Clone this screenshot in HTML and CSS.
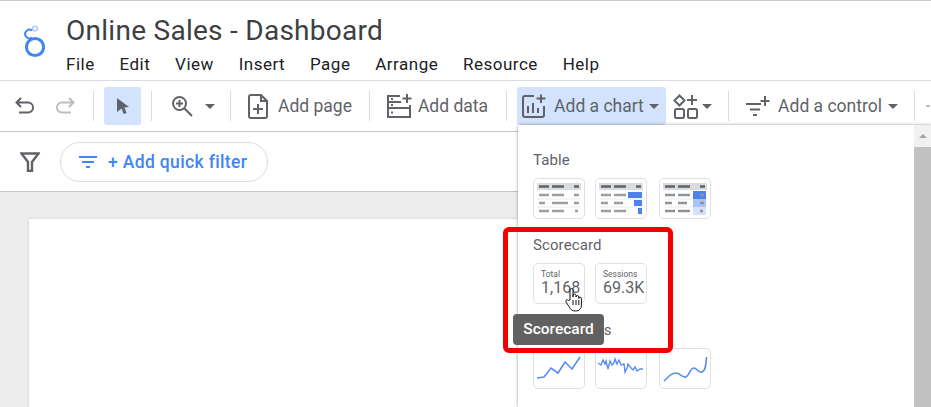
FILE: index.html
```html
<!DOCTYPE html>
<html lang="en">
<head>
  <meta charset="UTF-8">
  <title>Online Sales - Dashboard</title>
  <link rel="stylesheet" href="styles.css">
</head>
<body>
  <header class="app-header">
    <svg class="logo" width="24" height="36" viewBox="0 0 24 36">
      <circle cx="14" cy="4.500" r="2.400" fill="none" stroke="#a8c7fa" stroke-width="1.400"/>
      <path d="M11 13.500 A4.300 4.300 0 1 1 11 6.500" fill="none" stroke="#4285f4" stroke-width="2"/>
      <circle cx="14" cy="23" r="8.600" fill="none" stroke="#4285f4" stroke-width="3"/>
    </svg>
    <div class="title-block">
      <div class="doc-title">Online Sales - Dashboard</div>
      <nav class="menu-bar">
        <span>File</span><span>Edit</span><span>View</span><span>Insert</span><span>Page</span><span>Arrange</span><span>Resource</span><span>Help</span>
      </nav>
    </div>
  </header>

  <div class="toolbar">
    <svg class="icon undo" width="22" height="22" viewBox="0 0 22 22"><path d="M7 3 L2.500 7.500 L7 12 M2.500 7.500 H14 a5 5 0 0 1 0 10 H5" fill="none" stroke="#5f6368" stroke-width="2"/></svg>
    <svg class="icon redo" width="22" height="22" viewBox="0 0 22 22"><path d="M15 3 L19.500 7.500 L15 12 M19.500 7.500 H8 a5 5 0 0 0 0 10 H17" fill="none" stroke="#bdbdbd" stroke-width="2"/></svg>
    <i class="sep sep-a"></i>
    <button class="tool select-tool">
      <svg width="14" height="18" viewBox="0 0 14 18"><path d="M1 1 L13 10 L8.400 10.400 L10.600 16 L7.600 17 L5.600 11.400 L1 15 Z" fill="#5f6368"/></svg>
    </button>
    <i class="sep sep-b"></i>
    <svg class="icon zoom-icon" width="22" height="22" viewBox="0 0 22 22"><circle cx="8.500" cy="8.500" r="6.500" fill="none" stroke="#5f6368" stroke-width="2"/><path d="M13.500 13.500 L21 21 M8.500 5 V12 M5 8.500 H12" stroke="#5f6368" stroke-width="2" fill="none"/></svg>
    <i class="caret caret-zoom"></i>
    <i class="sep sep-c"></i>
    <svg class="icon page-icon" width="20" height="25" viewBox="0 0 20 25"><path d="M3 1 H13 L19 7 V22 a2 2 0 0 1 -2 2 H3 a2 2 0 0 1 -2 -2 V3 a2 2 0 0 1 2 -2 Z M13 1 V7 H19 M10 10 V20 M5 15 H15" fill="none" stroke="#5f6368" stroke-width="2"/></svg>
    <span class="tool-label label-page">Add page</span>
    <i class="sep sep-d"></i>
    <svg class="icon data-icon" width="26" height="26" viewBox="0 0 26 26"><path d="M14 3 H2 V15 H24 V12 M2 15 V24 H24 V15 M2 9 H15 M21 1 V10 M16.500 5.500 H25.500" fill="none" stroke="#5f6368" stroke-width="2"/><path d="M5 6 H7 M5 12 H7 M5 19.500 H7" stroke="#5f6368" stroke-width="2"/></svg>
    <span class="tool-label label-data">Add data</span>
    <i class="sep sep-e"></i>
    <button class="tool chart-tool">
      <svg width="24" height="24" viewBox="0 0 24 24"><path d="M12 2 H3 a2 2 0 0 0 -2 2 V21 a2 2 0 0 0 2 2 H20 a2 2 0 0 0 2 -2 V12 M19 0.500 V9 M14.500 4.500 H23.500 M6 12 V19 M11 9 V19 M16 14 V19" fill="none" stroke="#5f6368" stroke-width="2"/></svg>
      <span class="tool-label">Add a chart</span>
      <i class="caret"></i>
    </button>
    <svg class="icon shapes-icon" width="25" height="25" viewBox="0 0 25 25"><path d="M6.500 1.500 L11.500 6.500 L6.500 11.500 L1.500 6.500 Z M19 1 V11 M14 6 H24" fill="none" stroke="#5f6368" stroke-width="2"/><rect x="2" y="15" width="9" height="9" rx="1.500" fill="none" stroke="#5f6368" stroke-width="2"/><rect x="15" y="15" width="9" height="9" rx="1.500" fill="none" stroke="#5f6368" stroke-width="2"/></svg>
    <i class="caret caret-shapes"></i>
    <i class="sep sep-f"></i>
    <svg class="icon control-icon" width="25" height="22" viewBox="0 0 25 22"><path d="M1 9 H16 M5 14.500 H15 M8 20 H12 M20 1 V11 M15.500 6 H24.500" fill="none" stroke="#5f6368" stroke-width="2"/></svg>
    <span class="tool-label label-control">Add a control</span>
    <i class="caret caret-control"></i>
    <i class="sep sep-g"></i>
    <i class="edge-mark"></i>
  </div>

  <div class="filter-bar">
    <svg class="funnel" width="20" height="20" viewBox="0 0 20 20"><path d="M1.500 1.500 H18.500 L12 10 V19 H8 V10 Z" fill="none" stroke="#5f6368" stroke-width="2.400"/></svg>
    <button class="quick-filter">
      <svg width="18" height="12" viewBox="0 0 18 12"><path d="M0 1 H18 M3 6 H15 M7 11 H11" stroke="#4285f4" stroke-width="1.800"/></svg>
      <span>+ Add quick filter</span>
    </button>
  </div>

  <main class="canvas">
    <div class="report-page"></div>
  </main>

  <aside class="chart-menu">
    <div class="menu-scroll">
      <h3 class="group-title">Table</h3>
      <div class="thumb-row">
        <div class="thumb">
          <svg width="52" height="41" viewBox="0 0 52 41">
            <rect x="4" y="5" width="44" height="7" fill="#dadce0"/>
            <path d="M6 8.500 H16 M19 8.500 H31 M41 8.500 H46" stroke="#5f6368" stroke-width="2.600"/>
            <path d="M6 17 H16 M19 17 H31 M41 17 H46 M6 25 H12 M19 25 H35 M41 25 H46 M6 33 H16 M19 33 H31 M42 33 H45" stroke="#9e9e9e" stroke-width="2.600"/>
            <path d="M4 21 H48 M4 29 H48" stroke="#e8eaed"/>
          </svg>
        </div>
        <div class="thumb">
          <svg width="52" height="41" viewBox="0 0 52 41">
            <rect x="4" y="5" width="44" height="7" fill="#dadce0"/>
            <path d="M6 8.500 H16 M19 8.500 H31 M41 8.500 H46" stroke="#5f6368" stroke-width="2.600"/>
            <path d="M6 17 H16 M19 17 H31 M6 25 H13 M19 25 H28 M6 33 H16 M19 33 H31" stroke="#9e9e9e" stroke-width="2.600"/>
            <path d="M4 21 H48 M4 29 H48" stroke="#e8eaed"/>
            <rect x="33" y="14" width="14" height="6" fill="#4d82ee"/>
            <rect x="39" y="22" width="8" height="6" fill="#4d82ee"/>
            <rect x="43" y="30" width="4" height="6" fill="#4d82ee"/>
          </svg>
        </div>
        <div class="thumb">
          <svg width="52" height="41" viewBox="0 0 52 41">
            <rect x="4" y="5" width="44" height="7" fill="#dadce0"/>
            <path d="M6 8.500 H16 M19 8.500 H31 M41 8.500 H46" stroke="#5f6368" stroke-width="2.600"/>
            <rect x="34" y="13" width="13" height="8" fill="#4d82ee"/>
            <rect x="34" y="21" width="13" height="8" fill="#a9c3f6"/>
            <rect x="34" y="29" width="13" height="8" fill="#d6e2fb"/>
            <path d="M6 17 H16 M19 17 H31 M6 25 H13 M19 25 H28 M6 33 H16 M19 33 H31 M41 17 H45 M41 25 H45 M41 33 H44" stroke="#8f9499" stroke-width="2.600"/>
            <path d="M4 21 H34 M4 29 H34" stroke="#e8eaed"/>
          </svg>
        </div>
      </div>

      <h3 class="group-title">Scorecard</h3>
      <div class="thumb-row">
        <div class="thumb score">
          <span class="score-name">Total</span>
          <span class="score-value">1,168</span>
        </div>
        <div class="thumb score">
          <span class="score-name">Sessions</span>
          <span class="score-value">69.3K</span>
        </div>
      </div>

      <h3 class="group-title">Time series</h3>
      <div class="thumb-row">
        <div class="thumb">
          <svg width="52" height="41" viewBox="0 0 52 41"><path d="M4 30 L11 29 L18 20 L25 25 L32 14 L39 21 L47 9" fill="none" stroke="#5b8def" stroke-width="1.600"/></svg>
        </div>
        <div class="thumb">
          <svg width="52" height="41" viewBox="0 0 52 41"><path d="M3 15 L6 17 L8 12 L10 16 L11 13 L13 21 L15 13 L17 17 L19 15 L20 11 L22 16 L24 12 L26 17 L29 16 L30 24 L32 20 L33 16 L36 20 L38 22 L40 19 L42 23 L45 21 L48 21" fill="none" stroke="#5b8def" stroke-width="1.400"/></svg>
        </div>
        <div class="thumb">
          <svg width="52" height="41" viewBox="0 0 52 41"><path d="M5 33 C10 28 13 25 17 25 C21 25 23 30 27 29 C30 28 31 20 35 20 C38 20 39 25 43 24 C47 23 47 15 47.500 9" fill="none" stroke="#5b8def" stroke-width="1.600"/></svg>
        </div>
      </div>
    </div>
    <div class="scrollbar">
      <i class="scroll-arrow"></i>
      <div class="scroll-handle"></div>
    </div>
  </aside>

  <div class="callout"></div>
  <div class="tooltip">Scorecard</div>
  <svg class="hand-cursor" width="17" height="25" viewBox="0 0 17 25">
    <path d="M5 13 V3 a1.500 1.500 0 0 1 3 0 V10 V8.500 a1.500 1.500 0 0 1 3 0 V10 a1.400 1.400 0 0 1 2.800 0 V11.500 a1.300 1.300 0 0 1 2.600 0 V18 C16.400 22 14 24 10.500 24 C7 24 5.500 22.500 4 19.500 L1 15 C0 13 2.500 12 3.500 13.500 Z" fill="#fff" stroke="#111" stroke-width="1"/>
    <path d="M8 13 V18 M11 13 V18 M13.800 13 V18" stroke="#111" stroke-width="1" fill="none"/>
  </svg>
</body>
</html>
```

FILE: styles.css
```css
* {
  margin: 0;
  padding: 0;
  box-sizing: border-box;
}

html, body {
  width: 931px;
  height: 407px;
  overflow: hidden;
}

body {
  background-color: #ededed;
  font-family: Roboto, Arial, sans-serif;
  color: #5f6368;
  display: flex;
  flex-direction: column;
  border-top: 1px solid #c9c9c9;
}

/* Header */
.app-header {
  flex: none;
  display: flex;
  height: 80px;
  padding-left: 21px;
  background-color: #fff;
  border-bottom: 1px solid #dadce0;
}

.logo {
  margin-top: 23px;
}

.title-block {
  margin-left: 21px;
  padding-top: 13px;
}

.doc-title {
  font-size: 28px;
  line-height: 34px;
  color: #3c4043;
  letter-spacing: 0.27px;
}

.menu-bar {
  display: flex;
  gap: 24.800px;
  margin-top: 5px;
  font-size: 17px;
  line-height: 22px;
  letter-spacing: 0.500px;
  color: #202124;
}

/* Toolbar */
.toolbar {
  flex: none;
  display: flex;
  align-items: center;
  height: 51px;
  padding-left: 14px;
  background-color: #fff;
  border-bottom: 1px solid #c4c4c4;
}

.icon {
  flex: none;
}

.redo { margin-left: 18px; }
.zoom-icon { margin-left: 19px; }
.page-icon { margin-left: 17px; }
.data-icon { margin-left: 16px; }
.shapes-icon { margin-left: 7px; }
.control-icon { margin-left: 16px; }

.sep {
  flex: none;
  width: 1px;
  height: 30px;
  background-color: #dadce0;
}

.sep-a { margin-left: 17px; }
.sep-b { margin-left: 10px; }
.sep-c { margin-left: 15px; }
.sep-d { margin-left: 17px; }
.sep-e { margin-left: 18px; }
.sep-f { margin-left: 16px; }
.sep-g { margin-left: 16px; }

.edge-mark {
  flex: none;
  width: 4px;
  height: 2px;
  margin-left: 11px;
  background-color: #bdbdbd;
}

.tool {
  flex: none;
  display: flex;
  align-items: center;
  height: 38px;
  border: none;
  border-radius: 3px;
  background-color: #d3e3fd;
  font-family: inherit;
  color: inherit;
}

.select-tool {
  width: 37px;
  margin-left: 10px;
  justify-content: center;
}

.chart-tool {
  width: 149px;
  margin-left: 10px;
  padding-left: 5px;
}

.chart-tool .tool-label {
  margin-left: 8px;
}

.chart-tool .caret {
  margin-left: 5px;
}

.tool-label {
  font-size: 17.500px;
  white-space: nowrap;
}

.label-page { margin-left: 10px; }
.label-data { margin-left: 6px; }
.label-control { margin-left: 8px; }

.caret {
  flex: none;
  width: 0;
  height: 0;
  border-left: 5.500px solid transparent;
  border-right: 5.500px solid transparent;
  border-top: 5.500px solid #5f6368;
}

.caret-zoom { margin-left: 12px; }
.caret-shapes { margin-left: 4px; }
.caret-control { margin-left: 6px; }

/* Filter bar */
.filter-bar {
  flex: none;
  display: flex;
  align-items: center;
  height: 60px;
  padding-left: 20px;
  background-color: #fff;
  border-bottom: 1px solid #c4c4c4;
}

.quick-filter {
  display: flex;
  align-items: center;
  gap: 11px;
  width: 208px;
  height: 40px;
  margin-left: 20px;
  padding-left: 18px;
  border: 1px solid #dadce0;
  border-radius: 20px;
  background-color: #fff;
  font-family: inherit;
  font-size: 17.500px;
  font-weight: 500;
  letter-spacing: 0.350px;
  color: #4285f4;
}

/* Canvas */
.canvas {
  flex: 1;
  min-height: 0;
  overflow: hidden;
  padding: 27px 0 0 29px;
}

.report-page {
  height: 300px;
  background-color: #fff;
  box-shadow: 0 0 3px rgba(0, 0, 0, 0.12);
}

/* Chart dropdown */
.chart-menu {
  position: absolute;
  top: 125px;
  left: 518px;
  width: 413px;
  height: 282px;
  display: flex;
  background-color: #fff;
  box-shadow: 0 0 3px rgba(0, 0, 0, 0.4);
}

.menu-scroll {
  flex: 1;
  padding: 27px 0 0 15px;
}

.group-title {
  font-size: 15px;
  font-weight: 400;
  line-height: 16px;
  letter-spacing: 0.100px;
  color: #5f6368;
  margin-bottom: 10px;
}

.thumb-row {
  display: flex;
  gap: 10px;
  margin-bottom: 18px;
}

.thumb {
  width: 52px;
  height: 41px;
  border: 1px solid #e0e0e0;
  border-radius: 5px;
  overflow: hidden;
  background-color: #fff;
}

.thumb svg {
  display: block;
  margin: -1px;
}

.thumb:nth-child(3) {
  margin-left: 2px;
}

.score {
  display: flex;
  flex-direction: column;
  padding: 6px 0 0 7px;
  color: #5f6368;
}

.score-name {
  font-size: 8.500px;
  line-height: 9px;
}

.score-value {
  font-size: 16px;
  line-height: 17px;
}

.scrollbar {
  flex: none;
  width: 17px;
  background-color: #f1f1f1;
  padding-top: 9px;
}

.scroll-arrow {
  display: block;
  width: 0;
  height: 0;
  margin: 0 auto;
  border-left: 4px solid transparent;
  border-right: 4px solid transparent;
  border-bottom: 4px solid #a3a3a3;
}

.scroll-handle {
  height: 260px;
  margin-top: 9px;
  background-color: #c1c1c1;
}

/* Overlays */
.callout {
  position: absolute;
  top: 227px;
  left: 503px;
  width: 170px;
  height: 126px;
  border: 5px solid #f40000;
  border-radius: 6px;
}

.tooltip {
  position: absolute;
  top: 314px;
  left: 513px;
  width: 91px;
  height: 31px;
  border-radius: 4px;
  background-color: #616161;
  color: #fff;
  font-size: 15.500px;
  font-weight: 500;
  line-height: 31px;
  text-align: center;
}

.hand-cursor {
  position: absolute;
  top: 287px;
  left: 565px;
}
```
